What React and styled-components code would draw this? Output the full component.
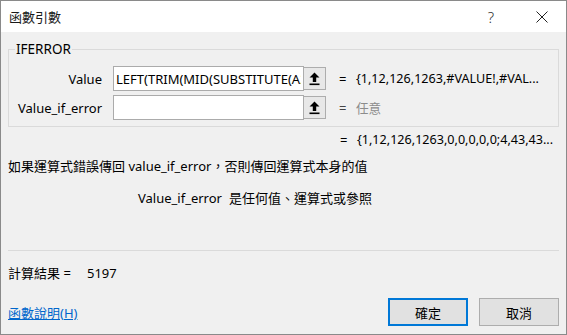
import React from 'react'
import { styled, createGlobalStyle } from 'styled-components'

const GlobalStyle = createGlobalStyle`
  html, body {
    margin: 0;
    padding: 0;
    background: #ffffff;
  }
  body {
    font-family: "Noto Sans", "Noto Sans CJK TC", sans-serif;
    font-size: 13px;
    color: #000;
  }
`

const Dialog = styled.div`
  width: 567px;
  height: 335px;
  box-sizing: border-box;
  border: 1px solid #8a8a8a;
  display: flex;
  flex-direction: column;
  background: #f0f0f0;
`

const TitleBar = styled.div`
  height: 31px;
  flex: none;
  background: #ffffff;
  display: flex;
  align-items: center;
  padding-left: 8px;
  padding-right: 1px;
`

const Title = styled.span`
  flex: 1;
  font-family: "Noto Sans CJK TC", sans-serif;
  font-size: 13px;
  color: #1a1a1a;
`

const TitleButton = styled.div`
  width: ${p => p.$w}px;
  margin-right: ${p => p.$mr || 0}px;
  height: 31px;
  display: flex;
  align-items: center;
  justify-content: center;
  color: #333;
  font-size: 15px;
  font-weight: 300;
`

const Body = styled.div`
  flex: 1;
  display: flex;
  flex-direction: column;
  padding: 7px 7px 0 7px;
`

const Group = styled.fieldset`
  margin: 0;
  padding: 7px 0 6px 0;
  border: 1px solid #dadada;
  display: flex;
  flex-direction: column;
  gap: 4px;
`

const Legend = styled.legend`
  margin-left: 6px;
  padding: 0 1px;
  line-height: 20px;
  font-size: 13.5px;
`

const ArgRow = styled.div`
  height: 25px;
  display: flex;
  align-items: center;
`

const ArgLabel = styled.label`
  flex: 0 0 93px;
  text-align: right;
  margin-right: 11px;
`

const ArgInput = styled.input`
  width: 191px;
  height: 25px;
  box-sizing: border-box;
  border: 1px solid #ababab;
  background: #fff;
  padding: 0 2px;
  font-family: "Noto Sans", "Noto Sans CJK TC", sans-serif;
  font-size: 13px;
  color: #000;
  outline: none;
`

const RefButton = styled.div`
  width: 23px;
  height: 23px;
  box-sizing: border-box;
  border: 1px solid #adadad;
  background: #e8e8e8;
  display: flex;
  align-items: center;
  justify-content: center;
  margin-left: -1px;
`

const Equals = styled.span`
  margin-left: ${p => p.$ml}px;
  flex: 0 0 17px;
  color: ${p => (p.$muted ? '#444' : '#000')};
`

const ArgValue = styled.span`
  color: ${p => (p.$muted ? '#8c8c8c' : '#000')};
  font-size: 12.6px;
  white-space: nowrap;
`

const ResultLine = styled.div`
  margin-top: 3px;
  line-height: 20px;
  display: flex;
  white-space: nowrap;
`

const Description = styled.div`
  margin-top: 6px;
  line-height: 20px;
  white-space: nowrap;
`

const ArgHelp = styled.div`
  margin-top: 12px;
  padding-left: 130px;
  line-height: 20px;
  display: flex;
  gap: 7px;
`

const Separator = styled.hr`
  margin: 42px 0 0 0;
  border: none;
  border-top: 1px solid #dadada;
  height: 0;
`

const Computed = styled.div`
  margin-top: 12px;
  line-height: 20px;
  display: flex;
  white-space: nowrap;
`

const ComputedLabel = styled.span`
  flex: 0 0 79px;
`

const Footer = styled.div`
  margin-top: 15px;
  height: 28px;
  display: flex;
  align-items: center;
`

const HelpLink = styled.a`
  flex: 1;
  color: #0066cc;
  text-decoration: underline;
  cursor: pointer;
`

const DialogButton = styled.button`
  width: 80px;
  height: 28px;
  box-sizing: border-box;
  margin-left: ${p => (p.$first ? '0' : '11px')};
  border: 1px solid ${p => (p.$default ? '#0078d7' : '#adadad')};
  box-shadow: ${p => (p.$default ? 'inset 0 0 0 1px #0078d7' : 'none')};
  background: #e1e1e1;
  font-family: "Noto Sans CJK TC", sans-serif;
  font-size: 13px;
  color: #000;
  padding: 0;
`

function RefIcon() {
  return (
    <svg width="11" height="14" viewBox="0 0 11 14">
      <path d="M5.5 0.5 L10.5 5.5 L7.2 5.5 L7.2 10 L3.8 10 L3.8 5.5 L0.5 5.5 Z" fill="#000" />
      <rect x="0.5" y="11.5" width="10" height="1.6" fill="#000" />
    </svg>
  )
}

function CloseIcon() {
  return (
    <svg width="12" height="12" viewBox="0 0 12 12">
      <path d="M0.5 0.5 L11.5 11.5 M11.5 0.5 L0.5 11.5" stroke="#222" strokeWidth="1" />
    </svg>
  )
}

export default function App() {
  return (
    <>
      <GlobalStyle />
      <Dialog>
        <TitleBar>
          <Title>函數引數</Title>
          <TitleButton $w={36} $mr={10}>?</TitleButton>
          <TitleButton $w={46}>
            <CloseIcon />
          </TitleButton>
        </TitleBar>
        <Body>
          <Group>
            <Legend>IFERROR</Legend>
            <ArgRow>
              <ArgLabel>Value</ArgLabel>
              <ArgInput readOnly value="LEFT(TRIM(MID(SUBSTITUTE(A2,&quot;,&quot;,REPT(&quot; &quot;,99)" />
              <RefButton>
                <RefIcon />
              </RefButton>
              <Equals $ml={13}>=</Equals>
              <ArgValue>{'{1,12,126,1263,#VALUE!,#VAL...'}</ArgValue>
            </ArgRow>
            <ArgRow>
              <ArgLabel>Value_if_error</ArgLabel>
              <ArgInput readOnly value="" />
              <RefButton>
                <RefIcon />
              </RefButton>
              <Equals $ml={13} $muted>=</Equals>
              <ArgValue $muted>任意</ArgValue>
            </ArgRow>
          </Group>
          <ResultLine>
            <Equals $ml={332}>=</Equals>
            <ArgValue>{'{1,12,126,1263,0,0,0,0,0;4,43,43...'}</ArgValue>
          </ResultLine>
          <Description>如果運算式錯誤傳回 value_if_error，否則傳回運算式本身的值</Description>
          <ArgHelp>
            <span>Value_if_error</span>
            <span>是任何值、運算式或參照</span>
          </ArgHelp>
          <Separator />
          <Computed>
            <ComputedLabel>計算結果 =</ComputedLabel>
            <span>5197</span>
          </Computed>
          <Footer>
            <HelpLink>函數說明(H)</HelpLink>
            <DialogButton $first $default>確定</DialogButton>
            <DialogButton>取消</DialogButton>
          </Footer>
        </Body>
      </Dialog>
    </>
  )
}
